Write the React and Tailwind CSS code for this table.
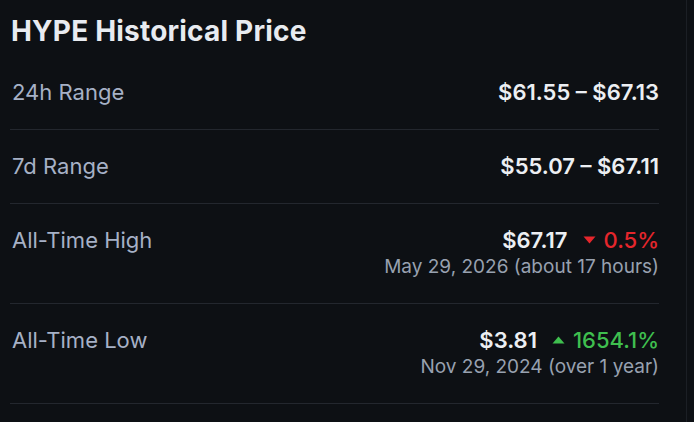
import React from 'react';

const rows = [
  { label: '24h Range', value: '$61.55 – $67.13' },
  { label: '7d Range', value: '$55.07 – $67.11' },
  { label: 'All-Time High', value: '$67.17', change: '0.5%', up: false, sub: 'May 29, 2026 (about 17 hours)' },
  { label: 'All-Time Low', value: '$3.81', change: '1654.1%', up: true, sub: 'Nov 29, 2024 (over 1 year)' },
];

const Caret = ({ up }) => (
  <svg width="13" height="8" viewBox="0 0 13 8" className={up ? 'text-[#3fbf4f]' : 'text-[#e5262c]'}>
    {up ? <path d="M6.5 0.5 L12.5 7.5 H0.5 Z" fill="currentColor" /> : <path d="M0.5 0.5 H12.5 L6.5 7.5 Z" fill="currentColor" />}
  </svg>
);

export default function App() {
  return (
    <div className="w-[694px] h-[422px] bg-[#0d1014] overflow-hidden flex" style={{ fontFamily: 'Inter, "Noto Sans", sans-serif' }}>
      <div className="w-[687px] pl-[10px] pr-[27px] border-r border-[#1b1f25]">
        <h2 className="pl-[1px] pt-[13px] pb-[7px] text-[28px] leading-[36px] font-bold tracking-[0.2px] text-[#e8ebf0]">HYPE Historical Price</h2>
        {rows.map((r) => (
          <div key={r.label} className="flex justify-between items-start pt-[22px] pb-[23px] border-b border-[#23272e]">
            <span className="pl-[2px] text-[22px] leading-[28px] text-[#a6b1c6]">{r.label}</span>
            <div className="flex flex-col items-end">
              <div className="flex items-center text-[22px] leading-[28px] font-semibold text-[#eceff3]">
                <span>{r.value}</span>
                {r.change && (
                  <span className={'flex items-center gap-[8px] ml-[15px] font-medium ' + (r.up ? 'text-[#3fbf4f]' : 'text-[#e5262c]')}>
                    <Caret up={r.up} />
                    {r.change}
                  </span>
                )}
              </div>
              {r.sub && <span className="text-[19px] leading-[26px] text-[#98a1b0]">{r.sub}</span>}
            </div>
          </div>
        ))}
      </div>
    </div>
  );
}
